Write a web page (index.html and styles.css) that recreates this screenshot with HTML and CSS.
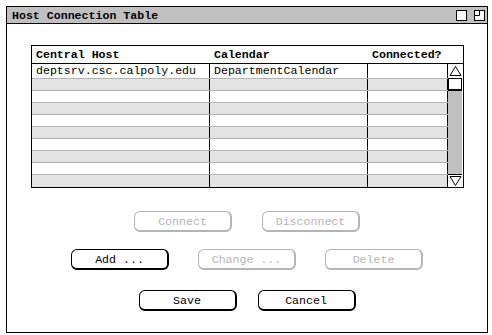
FILE: index.html
```html
<!DOCTYPE html>
<html lang="en">
<head>
  <meta charset="UTF-8" />
  <title>Host Connection Table</title>
  <link rel="stylesheet" href="styles.css">
</head>
<body>
  <div class="window">
    <div class="titlebar">
      <span class="title">Host Connection Table</span>
      <span class="title-icons">
        <svg width="11" height="11" viewBox="0 0 11 11"><rect x="0.5" y="0.5" width="10" height="10" fill="#fff" stroke="#000"/></svg>
        <svg width="11" height="11" viewBox="0 0 11 11"><rect x="0.5" y="0.5" width="10" height="10" fill="#fff" stroke="#000"/><polyline points="5.5,0.5 5.5,5.5 0.5,5.5" fill="none" stroke="#000"/></svg>
      </span>
    </div>

    <div class="content">
      <div class="table">
        <div class="thead">
          <div class="th">Central Host</div>
          <div class="th">Calendar</div>
          <div class="th">Connected?</div>
        </div>
        <div class="tbody">
          <div class="rows">
            <div class="row first"><div class="td">deptsrv.csc.calpoly.edu</div><div class="td">DepartmentCalendar</div><div class="td"></div></div>
            <div class="row alt"><div class="td"></div><div class="td"></div><div class="td"></div></div>
            <div class="row"><div class="td"></div><div class="td"></div><div class="td"></div></div>
            <div class="row alt"><div class="td"></div><div class="td"></div><div class="td"></div></div>
            <div class="row"><div class="td"></div><div class="td"></div><div class="td"></div></div>
            <div class="row alt"><div class="td"></div><div class="td"></div><div class="td"></div></div>
            <div class="row"><div class="td"></div><div class="td"></div><div class="td"></div></div>
            <div class="row alt"><div class="td"></div><div class="td"></div><div class="td"></div></div>
            <div class="row"><div class="td"></div><div class="td"></div><div class="td"></div></div>
            <div class="row alt lastrow"><div class="td"></div><div class="td"></div><div class="td"></div></div>
          </div>
          <div class="scroll">
            <div class="arrow up"><svg width="13" height="12" viewBox="0 0 13 12"><polygon points="6.5,1.5 12,10.5 1,10.5" fill="#fff" stroke="#000"/></svg></div>
            <div class="thumb"></div>
            <div class="track"></div>
            <div class="arrow down"><svg width="13" height="12" viewBox="0 0 13 12"><polygon points="1,1.5 12,1.5 6.5,10.5" fill="#fff" stroke="#000"/></svg></div>
          </div>
        </div>
      </div>

      <div class="btn-row row1">
        <button class="btn" disabled>Connect</button>
        <button class="btn" disabled>Disconnect</button>
      </div>
      <div class="btn-row row2">
        <button class="btn">Add ...</button>
        <button class="btn" disabled>Change ...</button>
        <button class="btn" disabled>Delete</button>
      </div>
      <div class="btn-row row3">
        <button class="btn">Save</button>
        <button class="btn">Cancel</button>
      </div>
    </div>
  </div>
</body>
</html>
```
FILE: styles.css
```css
body {
  margin: 0;
  background: #fff;
  font-family: "Liberation Mono", "Courier New", monospace;
  font-size: 11.6px;
  color: #000;
}
.window {
  margin: 6px 0 0 6px;
  width: 480px;
  height: 325px;
  border: 1px solid #000;
  background: #fff;
}
.titlebar {
  height: 16px;
  background: #c0c0c0;
  border-bottom: 1px solid #000;
  display: flex;
  align-items: center;
  justify-content: space-between;
  padding: 0 2px 0 5px;
}
.title {
  font-weight: bold;
}
.title-icons {
  display: flex;
  gap: 7px;
  padding-top: 1px;
}
.title-icons svg {
  display: block;
}
.content {
  padding-top: 21px;
}
.table {
  width: 431px;
  margin-left: 24px;
  border: 1px solid #000;
}
.thead {
  display: grid;
  grid-template-columns: 178px 158px 95px;
  height: 17px;
  border-bottom: 1px solid #000;
  font-weight: bold;
}
.th {
  padding: 2px 0 0 4px;
}
.tbody {
  display: flex;
}
.rows {
  width: 416px;
}
.row {
  display: grid;
  grid-template-columns: 178px 158px 80px;
  height: 11px;
  border-top: 1px solid #b4b4b4;
  background: #fff;
}
.row.first {
  height: 14px;
  border-top: none;
}
.row.alt {
  background: #e3e3e3;
}
.row.lastrow {
  height: 12px;
}
.td {
  border-right: 1px solid #000;
  padding: 0 0 0 4px;
  line-height: 13px;
  white-space: nowrap;
  overflow: hidden;
}
.scroll {
  width: 14px;
  display: flex;
  flex-direction: column;
  background: #c0c0c0;
}
.arrow {
  background: #fff;
  height: 14px;
  display: flex;
  align-items: center;
  justify-content: center;
}
.arrow.down {
  border-top: 1px solid #000;
  height: 12px;
}
.thumb {
  height: 10px;
  background: #fff;
  border: 1px solid #000;
  border-width: 1px 1px 2px 1px;
}
.track {
  flex: 1;
}
.btn-row {
  display: flex;
  justify-content: center;
  gap: 30px;
}
.row1 { margin-top: 23px; }
.row2 { margin-top: 17px; gap: 29px; }
.row3 { margin-top: 20px; gap: 21px; }
.btn {
  width: 98px;
  height: 21px;
  padding: 0;
  background: #fff;
  border: 1px solid #000;
  border-right-width: 2px;
  border-bottom-width: 2px;
  border-radius: 6px;
  font-family: "Liberation Mono", "Courier New", monospace;
  font-size: 11.6px;
  font-weight: normal;
  color: #000;
}
.btn:disabled {
  color: #b4b4b4;
  border-color: #b4b4b4;
}
```
